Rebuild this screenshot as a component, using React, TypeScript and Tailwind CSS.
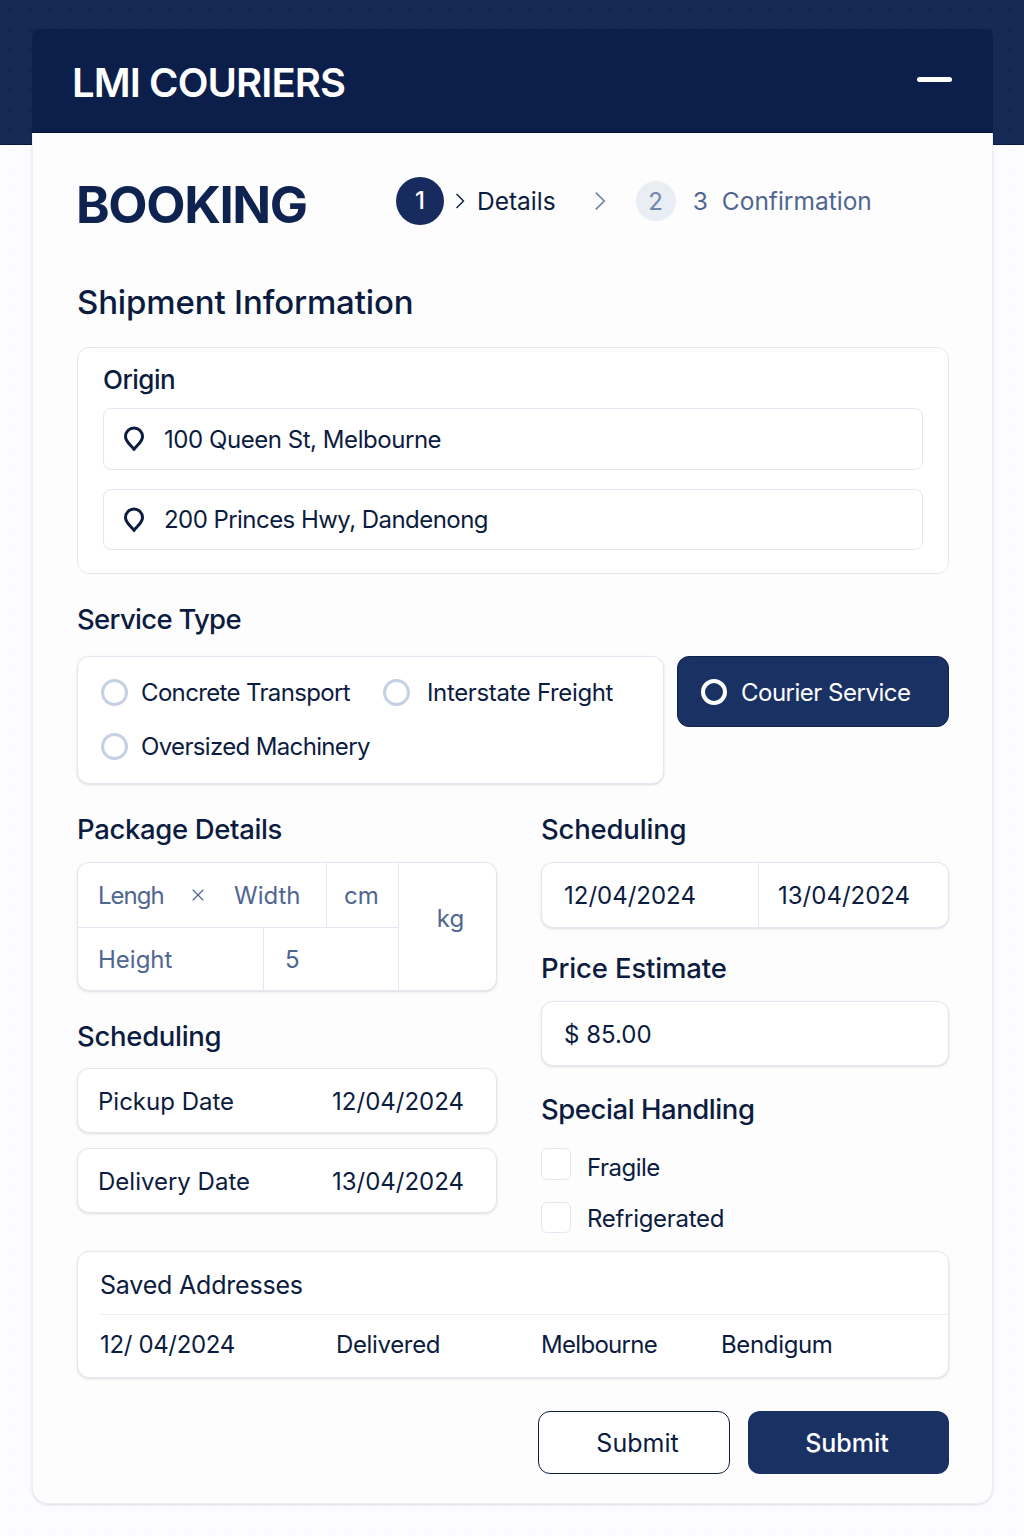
import React from "react";
import { X } from "lucide-react";

function Pin() {
  return (
    <svg width="22" height="26" viewBox="0 0 22 26" fill="none" stroke="#0c1c40" strokeWidth="3" strokeLinejoin="round" className="shrink-0">
      <path d="M11 23.5C8.5 19.5 2.5 16 2.5 10.5a8.5 8.5 0 0 1 17 0c0 5.500-6 9-8.500 13z" />
    </svg>
  );
}

function Chevron({ className, size }: { className: string; size: number }) {
  return (
    <svg width={size} height={size * 2} viewBox="0 0 10 20" fill="none" stroke="currentColor" strokeWidth="1.4" className={className}>
      <path d="M1.500 3l7 7-7 7" />
    </svg>
  );
}

function Radio() {
  return <span className="h-[27px] w-[27px] shrink-0 rounded-full border-[3px] border-[#c5d0e3] bg-white" />;
}

function Heading({ children, className }: { children: React.ReactNode; className: string }) {
  return <h3 className={`h-[34px] text-[27.5px] leading-[32px] font-medium text-[#0c1c40] ${className}`}>{children}</h3>;
}

export default function App() {
  return (
    <div className="relative h-[1536px] overflow-hidden bg-[#fcfcfe] bg-[radial-gradient(#f6f7fb_1px,transparent_1px)] bg-[length:20px_20px] font-[Inter,sans-serif] text-[#0c1c40]">
      {/* dotted navy band behind the card */}
      <div className="absolute inset-x-0 top-0 h-[145px] border-b border-[#0a1738] bg-[#172a55] bg-[radial-gradient(#11234c_2px,transparent_2px)] bg-[length:20px_20px]" />

      <div className="relative ml-[32px] w-[961px] pt-[29px]">
        <header className="flex h-[104px] items-center justify-between rounded-t-lg border-b border-[#050f2b] bg-[#0c1f4a] pr-[41px] pl-[40px]">
          <span className="pt-[4px] text-[40px] font-semibold tracking-[-0.9px] text-white">LMI COURIERS</span>
          <span className="mb-[2px] h-[5px] w-[35px] rounded-sm bg-white" />
        </header>

        <main className="h-[1371px] rounded-b-2xl border border-t-0 border-[#eceff6] bg-[#fdfdfe] pt-[44px] pr-[43px] pl-[44px] shadow-sm">
          <div className="flex h-[56px] items-start">
            <h1 className="-ml-px w-[320px] shrink-0 text-[51px] leading-[56px] font-bold tracking-[-1.4px] text-[#0f2350]">BOOKING</h1>
            <div className="flex h-[48px] items-center">
              <span className="flex h-[48px] w-[48px] items-center justify-center rounded-full bg-[#172b5e] text-[24px] font-medium text-white">1</span>
              <Chevron size={10} className="ml-[11px] text-[#0c1c40]" />
              <span className="ml-[12px] text-[24.5px] text-[#0c1c40]">Details</span>
              <Chevron size={12} className="ml-[38px] text-[#6d84ab]" />
              <span className="ml-[30px] flex h-[40px] w-[40px] items-center justify-center rounded-full bg-[#e9edf4] pt-[2px] text-[24px] text-[#6f86ad]">2</span>
              <span className="ml-[17px] text-[24.5px] text-[#4f6691]">3</span>
              <span className="ml-[14px] text-[24.5px] text-[#4f6691]">Confirmation</span>
            </div>
          </div>

          <h2 className="mt-[50px] h-[40px] text-[33px] leading-[38px] font-medium tracking-[-0.15px]">Shipment Information</h2>

          <section className="mt-[24px] h-[227px] rounded-xl border border-[#e4e8f2] bg-white px-[25px] pt-[16px]">
            <div className="h-[32px] text-[26px] leading-[32px] font-medium tracking-[-0.5px]">Origin</div>
            <div className="mt-[12px] flex h-[62px] items-center gap-[19px] rounded-lg border border-[#e2e7f1] pl-[19px] text-[24px] tracking-[-0.45px]">
              <Pin />
              <span className="pt-[2px]">100 Queen St, Melbourne</span>
            </div>
            <div className="mt-[19px] flex h-[61px] items-center gap-[19px] rounded-lg border border-[#e2e7f1] pl-[19px] text-[24px] tracking-[-0.55px]">
              <Pin />
              <span>200 Princes Hwy, Dandenong</span>
            </div>
          </section>

          <Heading className="mt-[29px] tracking-[-0.7px]">Service Type</Heading>
          <div className="mt-[19px] flex items-start gap-[13px]">
            <div className="h-[128px] w-[587px] rounded-xl border border-[#e4e8f2] bg-white pt-[22px] pl-[23px] shadow-sm">
              <div className="flex h-[27px] items-center text-[24px]">
                <Radio />
                <span className="ml-[13px] w-[242px] tracking-[-0.65px]">Concrete Transport</span>
                <Radio />
                <span className="ml-[17px] tracking-[-0.35px]">Interstate Freight</span>
              </div>
              <div className="mt-[27px] flex h-[27px] items-center text-[24px] tracking-[-0.65px]">
                <Radio />
                <span className="ml-[13px]">Oversized Machinery</span>
              </div>
            </div>
            <button className="flex h-[71px] w-[272px] items-center rounded-xl border border-[#10214a] bg-[#1a3263] pl-[23px] text-[24px] tracking-[-0.5px] text-white">
              <span className="h-[26px] w-[26px] rounded-full border-[4px] border-white" />
              <span className="ml-[14px] pt-[3px]">Courier Service</span>
            </button>
          </div>

          <div className="mt-[29px] grid grid-cols-[420px_408px] gap-x-[44px]">
            <div>
              <Heading className="tracking-[-0.35px]">Package Details</Heading>
              <div className="mt-[15px] flex h-[129px] rounded-xl border border-[#e2e7f1] bg-white text-[24px] text-[#4f6691] shadow-sm">
                <div className="w-[320px]">
                  <div className="flex h-[65px] items-center border-b border-[#e2e7f1]">
                    <span className="ml-[20px] w-[90px] pt-[2px] tracking-[-1px]">Lengh</span>
                    <X size={20} strokeWidth={1.4} className="shrink-0" />
                    <span className="ml-[26px] w-[92px] pt-[2px]">Width</span>
                    <span className="flex h-full flex-1 items-center border-l border-[#e2e7f1] pt-[2px] pl-[17px]">cm</span>
                  </div>
                  <div className="flex h-[63px] items-center">
                    <span className="w-[185px] pl-[20px]">Height</span>
                    <span className="flex h-full flex-1 items-center border-l border-[#e2e7f1] pl-[21px]">5</span>
                  </div>
                </div>
                <div className="flex flex-1 items-center justify-center border-l border-[#e2e7f1] pb-[16px] pl-[6px]">kg</div>
              </div>

              <Heading className="mt-[29px] tracking-[-0.3px]">Scheduling</Heading>
              <div className="mt-[14px] flex h-[65px] items-center justify-between rounded-xl border border-[#e2e7f1] bg-white pt-[2px] pr-[32px] pl-[20px] text-[24px] shadow-sm">
                <span>Pickup Date</span>
                <span>12/04/2024</span>
              </div>
              <div className="mt-[15px] flex h-[65px] items-center justify-between rounded-xl border border-[#e2e7f1] bg-white pt-[3px] pr-[32px] pl-[20px] text-[24px] shadow-sm">
                <span>Delivery Date</span>
                <span>13/04/2024</span>
              </div>
            </div>

            <div>
              <Heading className="tracking-[-0.2px]">Scheduling</Heading>
              <div className="mt-[15px] flex h-[66px] rounded-xl border border-[#e2e7f1] bg-white text-[24px] shadow-sm">
                <span className="flex w-[217px] items-center border-r border-[#e2e7f1] pt-[2px] pl-[22px]">12/04/2024</span>
                <span className="flex items-center pt-[2px] pl-[19px]">13/04/2024</span>
              </div>
              <Heading className="mt-[24px] tracking-[-0.15px]">Price Estimate</Heading>
              <div className="mt-[15px] flex h-[65px] items-center rounded-xl border border-[#e2e7f1] bg-white pt-[3px] pl-[22px] text-[24px] shadow-sm">$ 85.00</div>
              <Heading className="mt-[27px] tracking-[-0.45px]">Special Handling</Heading>
              <div className="mt-[21px] flex h-[32px] items-center gap-[16px] text-[24px] tracking-[-0.5px]">
                <span className="h-[32px] w-[30px] rounded-md border border-[#e2e7f1] bg-white" />
                <span className="pt-[8px]">Fragile</span>
              </div>
              <div className="mt-[22px] flex h-[31px] items-center gap-[16px] text-[24px] tracking-[-0.3px]">
                <span className="h-[31px] w-[30px] rounded-md border border-[#e2e7f1] bg-white" />
                <span className="pt-[2px]">Refrigerated</span>
              </div>
            </div>
          </div>

          <section className="mt-[18px] h-[127px] rounded-xl border border-[#e4e8f2] bg-white pl-[22px] shadow-sm">
            <div className="flex h-[63px] items-center border-b border-[#eceff5] pt-[6px] text-[25px] tracking-[-0.2px]">Saved Addresses</div>
            <div className="flex h-[60px] items-center text-[24px] tracking-[-0.35px]">
              <span className="w-[236px]">12/ 04/2024</span>
              <span className="w-[205px]">Delivered</span>
              <span className="w-[180px] tracking-[-0.7px]">Melbourne</span>
              <span>Bendigum</span>
            </div>
          </section>

          <div className="mt-[33px] flex justify-end gap-[18px] text-[25px]">
            <button className="h-[63px] w-[192px] rounded-xl border-[1.5px] border-[#0c1c40] bg-white pt-[2px] pl-[7px]">Submit</button>
            <button className="h-[63px] w-[201px] rounded-xl bg-[#1a3263] pt-[2px] pr-[3px] font-medium text-white">Submit</button>
          </div>
        </main>
      </div>
    </div>
  );
}
